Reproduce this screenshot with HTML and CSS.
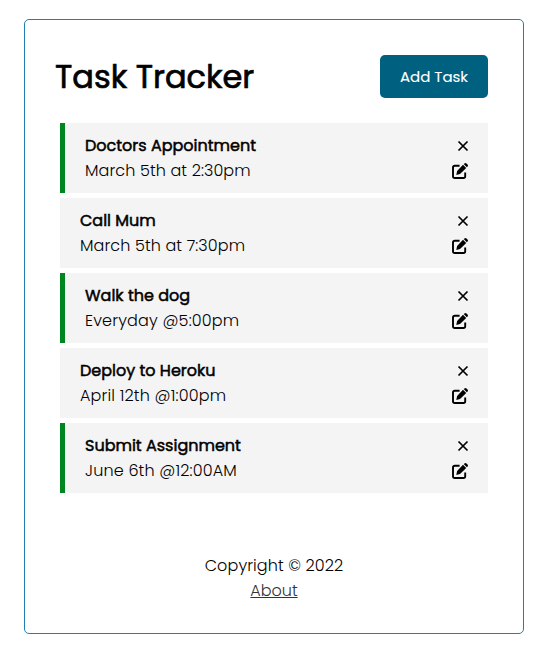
FILE: index.html
```html
<!DOCTYPE html>
<html lang="en">
<head>
<meta charset="utf-8">
<title>Task Tracker</title>
<link rel="stylesheet" href="styles.css">
</head>
<body>
<svg class="sprite" aria-hidden="true">
<symbol id="times" viewBox="0 0 12 12"><path d="M1.5 1.5 10.5 10.5M10.5 1.5 1.5 10.5" fill="none" stroke="currentColor" stroke-width="1.75"/></symbol>
<symbol id="edit" viewBox="0 0 16 16"><path d="M7.6 2.8H2.8Q1 2.8 1 4.6v8.6Q1 15 2.8 15h8.6q1.8 0 1.8-1.8V9.4" fill="none" stroke="currentColor" stroke-width="1.9"/><path d="M11 1.8 14.2 5 8 11.1 4.3 11.9 5.1 8ZM11.7 1.1 12.5.4Q13.5-.4 14.5.5l1 1q.9 1 .1 2l-.8.8Z" fill="currentColor"/></symbol>
</svg>
<main class="container">
<header class="header"><h1>Task Tracker</h1><button class="btn">Add Task</button></header>
<section>
<article class="task reminder"><div><h3>Doctors Appointment</h3><p>March 5th at 2:30pm</p></div><div class="actions"><svg class="times"><use href="#times"/></svg><svg class="edit"><use href="#edit"/></svg></div></article>
<article class="task"><div><h3>Call Mum</h3><p>March 5th at 7:30pm</p></div><div class="actions"><svg class="times"><use href="#times"/></svg><svg class="edit"><use href="#edit"/></svg></div></article>
<article class="task reminder"><div><h3>Walk the dog</h3><p class="time">Everyday @5:00pm</p></div><div class="actions"><svg class="times"><use href="#times"/></svg><svg class="edit"><use href="#edit"/></svg></div></article>
<article class="task"><div><h3>Deploy to Heroku</h3><p class="time">April 12th @1:00pm</p></div><div class="actions"><svg class="times"><use href="#times"/></svg><svg class="edit"><use href="#edit"/></svg></div></article>
<article class="task reminder"><div><h3>Submit Assignment</h3><p class="time">June 6th @12:00AM</p></div><div class="actions"><svg class="times"><use href="#times"/></svg><svg class="edit"><use href="#edit"/></svg></div></article>
</section>
<footer><p>Copyright © 2022</p><a href="#">About</a></footer>
</main>
</body>
</html>
```
FILE: styles.css
```css
* { box-sizing: border-box; margin: 0; padding: 0; }
body { background: #fff; color: #000; font: 300 16px/25px Poppins, Inter, sans-serif; }
.sprite { display: none; }
.container { width: 500px; height: 615px; margin: 19px 0 0 24px; padding: 35px 35px 30px 30px; border: 1px solid #1f80b0; border-radius: 5px; }
.header { display: flex; align-items: center; justify-content: space-between; height: 43px; margin-bottom: 25px; }
h1 { font-size: 32px; font-weight: 400; line-height: 43px; white-space: nowrap; -webkit-text-stroke: 0.7px #000; }
.btn { width: 108px; height: 43px; border: 0; border-radius: 5px; background: #006080; color: #fff; font: 400 15px/43px Poppins, Inter, sans-serif; -webkit-text-stroke: 0.1px #fff; }
.task { display: flex; justify-content: space-between; width: 428px; height: 70px; margin: 0 0 5px 5px; padding: 10px 20px; background: #f4f4f4; }
.task p { letter-spacing: 0.1px; }
.task .time { letter-spacing: 0.16px; }
.reminder { border-left: 5px solid #008620; }
h3 { font-size: 16px; font-weight: 400; line-height: 25px; -webkit-text-stroke: 0.5px #000; }
.actions { display: flex; flex-direction: column; align-items: flex-end; }
.times { width: 12px; height: 12px; margin: 7px -1px 0 0; }
.edit { width: 16px; height: 16px; margin-top: 11px; overflow: visible; }
footer { width: 438px; margin-top: 60px; text-align: center; }
footer p { letter-spacing: 0.1px; }
a { color: #333; }
```
